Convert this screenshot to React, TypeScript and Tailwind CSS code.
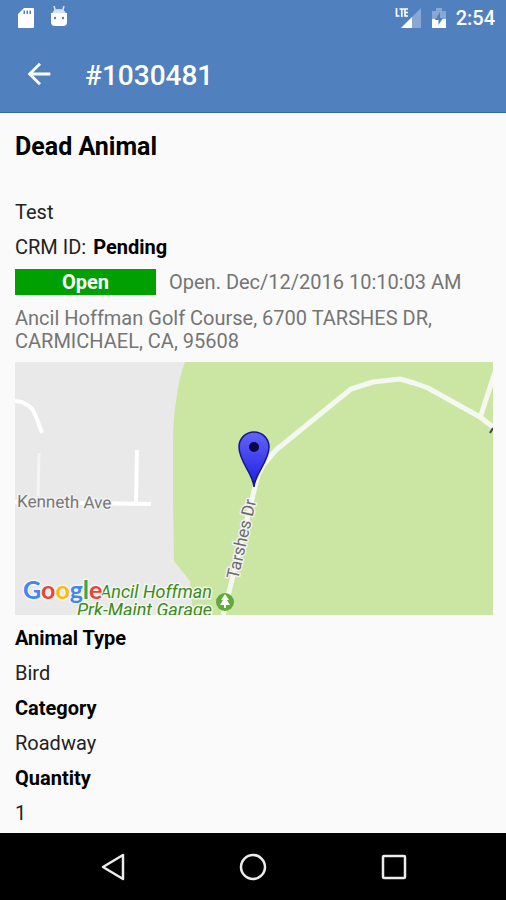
import type { ReactNode } from 'react';

const details = [
  { label: 'Animal Type', value: 'Bird' },
  { label: 'Category', value: 'Roadway' },
  { label: 'Quantity', value: '1' },
];

const googleLetters = [
  ['G', '#4285f4'],
  ['o', '#ea4335'],
  ['o', '#fbbc05'],
  ['g', '#4285f4'],
  ['l', '#34a853'],
  ['e', '#ea4335'],
];

function StatusBar() {
  return (
    <div className="flex h-9 items-center justify-between pr-[11px] pl-[18px]">
      <div className="flex items-center gap-4">
        <svg aria-hidden="true" viewBox="0 0 16 21" className="h-[21px] w-4">
          <path
            fill="#fff"
            fillRule="evenodd"
            d="M6 0H15Q16 0 16 1V19Q16 20 15 20H1Q0 20 0 19V6ZM5.500 2.500V6H7V2.500ZM8.500 2.500V6H10V2.500ZM11.500 2.500V6H13V2.500Z"
          />
        </svg>
        <svg aria-hidden="true" viewBox="0 0 18 21" className="mb-1 h-[21px] w-[18px]">
          <path d="M4 0L5.500 5M14 0L12.500 5" stroke="#dfe9f6" strokeWidth="1.500" />
          <path d="M2 8Q3 3 9 3Q15 3 16 8Z" fill="#d5e1f0" />
          <path d="M1 7H17V16Q17 20 13 20H5Q1 20 1 16Z" fill="#fff" />
          <circle cx="5" cy="12" r="1.200" fill="#5080bd" />
          <circle cx="13" cy="12" r="1.200" fill="#5080bd" />
        </svg>
      </div>
      <div className="flex items-center">
        <svg role="img" aria-label="LTE signal" viewBox="0 0 26 22" className="h-[22px] w-[26px]">
          <path d="M26 1V21H6Z" fill="#86a8d3" />
          <path d="M17 10V21H6Z" fill="#fff" />
          <path d="M1.500 1V9H4.500M4.500 2H9M6.800 2V10M13 2H10V9H13M10 5.500H13" fill="none" stroke="#fff" strokeWidth="1.700" />
        </svg>
        <svg role="img" aria-label="Battery charging" viewBox="0 0 14 21" className="ml-[11px] h-[21px] w-[14px]">
          <path d="M0 3H4V0H10V3H14V20H0Z" fill="#86a8d3" />
          <path d="M0 11H14V20H0Z" fill="#fff" />
          <path d="M8 4L3 12H6.500V17L11 10H8Z" fill="#5080bd" />
        </svg>
        <span className="ml-[10px] text-[20px] leading-6 font-medium">2:54</span>
      </div>
    </div>
  );
}

function LocationMap() {
  return (
    <svg
      role="img"
      aria-label="Map of the report location"
      viewBox="0 0 478 253"
      preserveAspectRatio="xMidYMid slice"
      className="h-[253px] w-full"
    >
      <rect width="478" height="253" fill="#e9e9e9" />
      <path d="M170 0Q164 16 162 33Q158 55 158 80V138L159 199L175 219L178 253H478V0Z" fill="#cae6a2" />
      <g fill="none" stroke="#fff" strokeWidth="4" strokeLinejoin="round">
        <path d="M0 39L7 40L14 44L18 48L22 57L27 71" />
        <path d="M24 91L23 134" stroke="#f5f5f5" strokeWidth="3" />
        <path d="M122 88L121 142" />
        <path d="M0 140L136 142" />
      </g>
      <g fill="none" stroke="#f5f8f2" strokeWidth="5" strokeLinejoin="round">
        <path d="M478 65L465 55L413 26L399 21L385 17L358 20L336 27L261 88L249 102L243 113L238 133L215 226L208 253" />
        <path d="M465 56L480 10" />
      </g>
      <path d="M475 71L478 66" stroke="#444" strokeWidth="2" />
      <g stroke="#f2f2f2" strokeWidth="3" strokeLinejoin="round" paintOrder="stroke" fontSize="17">
        <text x="2" y="145" fill="#777" transform="rotate(1 2 145)">Kenneth Ave</text>
        <text x="223" y="218" fill="#6c6c6c" transform="rotate(-77 223 218)">Tarshes Dr</text>
      </g>
      <g
        stroke="#f4f8f0"
        strokeWidth="3"
        strokeLinejoin="round"
        paintOrder="stroke"
        fontSize="18"
        fontStyle="italic"
        textAnchor="end"
        fill="#3d8a20"
      >
        <text x="197" y="236">Ancil Hoffman</text>
        <text x="197" y="254">Prk-Maint Garage</text>
      </g>
      <circle cx="210" cy="240" r="9" fill="#62a93b" />
      <path d="M210 232L214 238H212L215 243H211V246H209V243H205L208 238H206Z" fill="#fff" />
      <text
        x="8"
        y="237"
        fontFamily="Lato, sans-serif"
        fontSize="25"
        fontWeight="700"
        stroke="#f6f6f6"
        strokeWidth="3"
        strokeLinejoin="round"
        paintOrder="stroke"
      >
        {googleLetters.map(([letter, color], i) => (
          <tspan key={i} fill={color}>{letter}</tspan>
        ))}
      </text>
      <defs>
        <linearGradient id="pin" x1="0" y1="0" x2="0" y2="1">
          <stop offset="0" stopColor="#6464fa" />
          <stop offset="1" stopColor="#1c1ce0" />
        </linearGradient>
      </defs>
      <path
        d="M239 125C238 111 224 100 224 85A15 15 0 0 1 254 85C254 100 240 111 239 125Z"
        fill="url(#pin)"
        stroke="#16168c"
        strokeWidth="1.500"
      />
      <circle cx="239" cy="85" r="5" fill="#08084a" />
    </svg>
  );
}

function NavButton({ label, children }: { label: string; children: ReactNode }) {
  return (
    <button type="button" aria-label={label} className="flex items-center justify-center">
      <svg aria-hidden="true" viewBox="0 0 28 28" fill="none" stroke="#ececec" strokeWidth="2.500" strokeLinejoin="round" className="size-7">
        {children}
      </svg>
    </button>
  );
}

export default function App() {
  return (
    <div className="flex min-h-screen flex-col bg-[#fafafa] font-[Roboto,sans-serif] text-[20px] leading-[23px] text-[#222]">
      <header className="border-b border-[#2f6bb0] bg-[#5080bd] text-white">
        <StatusBar />
        <div className="flex h-[76px] items-center pl-[22px]">
          <button type="button" aria-label="Back">
            <svg aria-hidden="true" viewBox="0 0 24 24" className="size-[34px]">
              <path fill="#fff" d="M20 11H7.830l5.590-5.590L12 4l-8 8 8 8 1.410-1.410L7.830 13H20v-2z" />
            </svg>
          </button>
          <h1 className="ml-[29px] pt-[3px] text-[28px] leading-8 font-medium">#1030481</h1>
        </div>
      </header>

      <main className="flex-1 pt-4 pr-[13px] pb-[2px] pl-[15px]">
        <h2 className="mb-[31px] text-[25px] leading-[35px] font-bold text-black">Dead Animal</h2>
        <p className="leading-[35px]">Test</p>
        <p className="flex gap-[7px] leading-[35px]">
          <span>CRM ID:</span>
          <strong className="font-bold text-black">Pending</strong>
        </p>
        <div className="flex h-[34px] items-center gap-[13px]">
          <span className="w-[141px] shrink-0 bg-[#00a000] text-center leading-[26px] font-bold text-white">Open</span>
          <span className="text-[#757575]">Open. Dec/12/2016 10:10:03 AM</span>
        </div>
        <address className="mt-2 mb-[9px] text-[#757575] not-italic">
          Ancil Hoffman Golf Course, 6700 TARSHES DR, CARMICHAEL, CA, 95608
        </address>
        <LocationMap />
        <dl className="mt-[6px] leading-[35px]">
          {details.map(({ label, value }) => (
            <div key={label}>
              <dt className="font-bold text-black">{label}</dt>
              <dd>{value}</dd>
            </div>
          ))}
        </dl>
      </main>

      <nav aria-label="System" className="grid h-[67px] grid-cols-3 bg-black px-[43px]">
        <NavButton label="Back">
          <path d="M4 14L24 2V26Z" />
        </NavButton>
        <NavButton label="Home">
          <circle cx="14" cy="14" r="12" />
        </NavButton>
        <NavButton label="Recent apps">
          <rect x="4" y="3" width="22" height="22" rx="1" />
        </NavButton>
      </nav>
    </div>
  );
}
